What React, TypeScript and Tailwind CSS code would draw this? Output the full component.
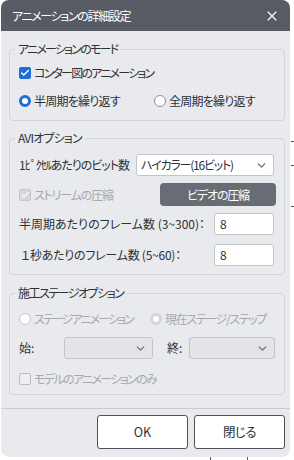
import React from 'react';
import { ChevronDown, X, Check } from 'lucide-react';

const font = { fontFamily: '"Noto Sans CJK JP", "Noto Sans", sans-serif' };

const CheckBox = ({ checked, disabled, label, track }: any) => (
  <label className="flex items-center h-5 gap-[3px]">
    <span
      className={
        'w-[12px] h-[12px] rounded-[2px] flex items-center justify-center border ' +
        (disabled
          ? checked
            ? 'bg-[#d6d8dc] border-[#c4c6ca]'
            : 'bg-[#eef0f2] border-[#b9bbc0]'
          : 'bg-[#1b6fd6] border-[#1b6fd6]')
      }
    >
      {checked && <Check size={10} strokeWidth={3.5} color={disabled ? '#f4f5f6' : '#ffffff'} />}
    </span>
    <span className={(disabled ? 'text-[#a6a8ad] ' : 'text-[#2e3136] ') + track}>{label}</span>
  </label>
);

const Radio = ({ checked, disabled, label, track }: any) => (
  <label className="flex items-center h-5 gap-[3px]">
    <span
      className={
        'w-[12px] h-[12px] rounded-full bg-white ' +
        (disabled
          ? checked
            ? 'border-[3px] border-[#d3d5d9]'
            : 'border border-[#c6c8cc] bg-[#eef0f2]'
          : checked
          ? 'border-[3.5px] border-[#1b6fd6]'
          : 'border border-[#8e9197]')
      }
    />
    <span className={(disabled ? 'text-[#a6a8ad] ' : 'text-[#2e3136] ') + track}>{label}</span>
  </label>
);

const Select = ({ value, disabled, className }: any) => (
  <div
    className={
      'h-[22px] rounded-[3px] border flex items-center justify-between pl-[4px] pr-[5px] ' +
      (disabled ? 'bg-[#e3e4e7] border-[#c3c5c9]' : 'bg-white border-[#c3c5c9]') +
      ' ' +
      className
    }
  >
    <span className="text-[#2e3136] tracking-[-1.2px]">{value}</span>
    <ChevronDown size={13} strokeWidth={2.6} color="#6d7077" />
  </div>
);

const Group = ({ title, track, children, className }: any) => (
  <fieldset className={'w-[276px] border border-[#d2d4d8] rounded-[4px] px-[9px] ' + className}>
    <legend className={'-ml-[4px] px-[3px] h-4 leading-4 text-[#2e3136] ' + track}>{title}</legend>
    {children}
  </fieldset>
);

export default function App() {
  return (
    <div className="w-[294px] h-[460px] bg-white relative text-[12px] whitespace-nowrap [font-feature-settings:'palt']" style={font}>
      <div className="ml-[1px] w-[289px] h-[457px] rounded-[8px] bg-[#e9eaee] overflow-hidden flex flex-col">
        {/* title bar */}
        <div className="h-[31px] bg-[#575c64] flex items-center justify-between pl-[11px] pr-[10px]">
          <span className="text-white tracking-[-1.35px]">アニメーションの詳細設定</span>
          <X size={16} strokeWidth={1.6} color="#ffffff" />
        </div>

        <div className="pt-[10px] pl-[8px] flex flex-col">
          <Group title="アニメーションのモード" track="tracking-[-1.8px]" className="pt-[6px] pb-[9px]">
            <CheckBox checked label="コンター図のアニメーション" track="tracking-[-1.8px]" />
            <div className="flex mt-[8px]">
              <div className="w-[135px]">
                <Radio checked label="半周期を繰り返す" track="tracking-[-0.75px]" />
              </div>
              <Radio label="全周期を繰り返す" track="tracking-[-0.75px]" />
            </div>
          </Group>

          <Group title="AVIオプション" track="tracking-[-0.8px]" className="mt-[9px] pt-[8px] pb-[8px] text-[#2e3136]">
            <div className="flex items-center justify-between h-[22px]">
              <span className="tracking-[-1px]">1ﾋﾟｸｾﾙあたりのビット数</span>
              <Select value="ハイカラー(16ビット)" className="w-[138px] mr-[1px]" />
            </div>
            <div className="flex items-center justify-between h-[23px] mt-[7px]">
              <CheckBox checked disabled label="ストリームの圧縮" track="tracking-[-1.15px]" />
              <div className="w-[116px] h-[23px] rounded-[4px] bg-[#686c74] text-white flex items-center justify-center -mr-[1px] tracking-[-1.15px]">
                ビデオの圧縮
              </div>
            </div>
            <div className="flex items-center justify-between h-[22px] mt-[7px]">
              <span>半周期あたりのフレーム数 (3~300)：</span>
              <div className="w-[60px] h-[22px] bg-white border border-[#c3c5c9] rounded-[3px] flex items-center pl-[5px] mr-[1px]">8</div>
            </div>
            <div className="flex items-center justify-between h-[22px] mt-[9px]">
              <span className="pl-[2px] tracking-[-0.24px]">１秒あたりのフレーム数 (5~60)：</span>
              <div className="w-[60px] h-[22px] bg-white border border-[#c3c5c9] rounded-[3px] flex items-center pl-[5px] mr-[1px]">8</div>
            </div>
          </Group>

          <Group title="施工ステージオプション" track="tracking-[-1.5px]" className="mt-[10px] pt-[8px] pb-[5px]">
            <div className="flex">
              <div className="w-[131px]">
                <Radio disabled label="ステージアニメーション" track="tracking-[-1.9px]" />
              </div>
              <Radio disabled checked label="現在ステージ/ステップ" track="tracking-[-1.35px]" />
            </div>
            <div className="flex items-center h-[22px] mt-[8px] text-[#2e3136]">
              <span className="w-[45px]">始:</span>
              <Select disabled value="" className="w-[89px]" />
              <span className="ml-[14px] w-[22px]">終:</span>
              <Select disabled value="" className="w-[86px]" />
            </div>
            <div className="mt-[10px]">
              <CheckBox disabled label="モデルのアニメーションのみ" track="tracking-[-1.65px]" />
            </div>
          </Group>
        </div>

        {/* footer */}
        <div className="mt-[13px] border-t border-[#c9cbcf] flex justify-end gap-[6px] pt-[6px] pr-[5px]">
          <button className="w-[91px] h-[34px] bg-white border border-[#4e5259] rounded-[3px] text-[#2e3136] text-[12.5px]">OK</button>
          <button className="w-[91px] h-[34px] bg-white border border-[#4e5259] rounded-[3px] text-[#2e3136] text-[12.5px] tracking-[-0.5px]">閉じる</button>
        </div>
      </div>

      {/* bits of the window behind */}
      <div className="absolute left-[291px] top-[141px] w-[3px] h-[1px] bg-[#55585e]" />
      <div className="absolute left-[291px] top-[165px] w-[3px] h-[1px] bg-[#55585e]" />
      <div className="absolute left-[291px] top-[206px] w-[3px] h-[1px] bg-[#55585e]" />
      <div className="absolute left-[210px] top-[457px] w-[1px] h-[3px] bg-[#55585e]" />
      <div className="absolute left-[247px] top-[457px] w-[1px] h-[3px] bg-[#55585e]" />
    </div>
  );
}
